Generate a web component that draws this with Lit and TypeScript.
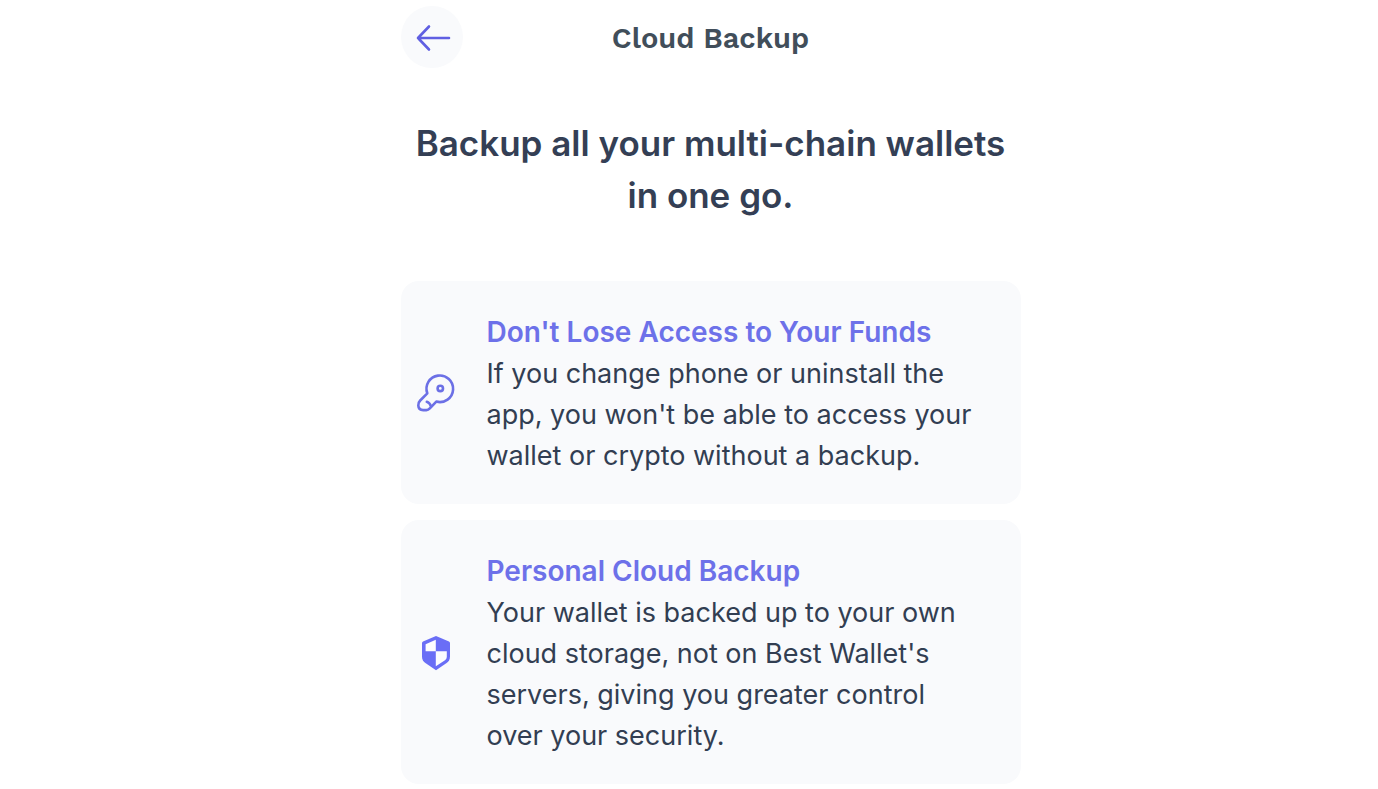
import { LitElement, html, svg, css } from "lit";
import { customElement, property } from "lit/decorators.js";

const keyIcon = svg`
  <g fill="none" stroke="#6c70e6" stroke-width="2.6" stroke-linecap="round" stroke-linejoin="round">
    <path d="M12.3 20.3 A13.3 13.3 0 1 1 21.3 28.6 L14.8 35.4 C13.8 36.5 12.9 37.1 11.4 37.1 H8.2 C5.2 37.1 3.4 35.2 3.3 32.4 C3.2 30.3 3.5 29.2 5.2 27.5 Z"/>
    <circle cx="25.3" cy="15.4" r="2.7"/>
    <path d="M11.8 28.8 C13.8 29.4 15.2 31 16 33.4"/>
  </g>`;

const shieldIcon = svg`
  <path fill="#6a6ef6" d="M21 4 L34 9.4 Q35 9.9 35 11 V24.5 Q35 28.6 31.6 31 L21 38.2 L10.4 31 Q7 28.6 7 24.5 V11 Q7 9.9 8 9.4 Z"/>
  <path fill="#fcfcff" d="M20.8 7.8 V19.2 H10.6 V12.2 Z M20.8 19.2 H31.8 V25 Q31.8 27 30 28.2 L20.8 34.2 Z"/>`;

@customElement("info-card")
export class InfoCard extends LitElement {
  @property() heading = "";
  @property() text = "";
  @property({ attribute: false }) icon: unknown = null;

  static styles = css`
    :host {
      display: grid;
      grid-template-columns: 40px 1fr;
      column-gap: 32px;
      align-items: center;
      padding: 30px 48px 28px 14px;
      border-radius: 18px;
      background: #f9fafc;
    }
    .icon {
      display: block;
      width: 42px;
      height: 42px;
    }
    .heading,
    .text {
      margin: 0;
    }
    .heading {
      font-size: 28px;
      font-weight: 600;
      line-height: 42px;
      color: #6d71e9;
    }
    .text {
      font-size: 27px;
      font-weight: 400;
      line-height: 41px;
      color: #323e52;
    }
  `;

  render() {
    return html`
      <svg class="icon" viewBox="0 0 42 42" aria-hidden="true">${this.icon}</svg>
      <div>
        <h3 class="heading">${this.heading}</h3>
        <p class="text">${this.text}</p>
      </div>
    `;
  }
}

@customElement("app-root")
export class AppRoot extends LitElement {
  static styles = css`
    :host {
      display: block;
      box-sizing: border-box;
      min-height: 100vh;
      padding: 6px 0 5px 43px;
      background: #ffffff;
      font-family: Inter, "Liberation Sans", sans-serif;
    }
    .screen {
      max-width: 620px;
      margin: 0 auto;
    }
    .bar {
      display: grid;
      grid-template-columns: 62px 1fr 62px;
      align-items: center;
    }
    .back {
      display: grid;
      place-items: center;
      width: 62px;
      height: 62px;
      padding: 0;
      border: 0;
      border-radius: 50%;
      background: #f9fafc;
      cursor: pointer;
    }
    .title {
      margin: 0;
      padding-top: 2px;
      text-align: center;
      font-family: "Work Sans", Inter, sans-serif;
      font-size: 29px;
      font-weight: 600;
      line-height: 36px;
      color: #414e5a;
    }
    .lead {
      margin: 49px 0 60px;
      text-align: center;
      font-size: 35px;
      font-weight: 600;
      line-height: 52px;
      color: #343f55;
    }
    .cards {
      display: grid;
      gap: 16px;
    }
  `;

  render() {
    return html`
      <main class="screen">
        <header class="bar">
          <button class="back" type="button" aria-label="Back">
            <svg width="40" height="32" viewBox="0 0 40 32" aria-hidden="true">
              <path d="M37 17 H6 M17 5.5 L6 17 L17 28.5" fill="none" stroke="#605fe2" stroke-width="2.6" stroke-linecap="round" stroke-linejoin="round"/>
            </svg>
          </button>
          <h1 class="title">Cloud Backup</h1>
        </header>
        <h2 class="lead">Backup all your multi-chain wallets in one go.</h2>
        <section class="cards">
          <info-card
            .icon=${keyIcon}
            heading="Don't Lose Access to Your Funds"
            text="If you change phone or uninstall the app, you won't be able to access your wallet or crypto without a backup."
          ></info-card>
          <info-card
            .icon=${shieldIcon}
            heading="Personal Cloud Backup"
            text="Your wallet is backed up to your own cloud storage, not on Best Wallet's servers, giving you greater control over your security."
          ></info-card>
        </section>
      </main>
    `;
  }
}
